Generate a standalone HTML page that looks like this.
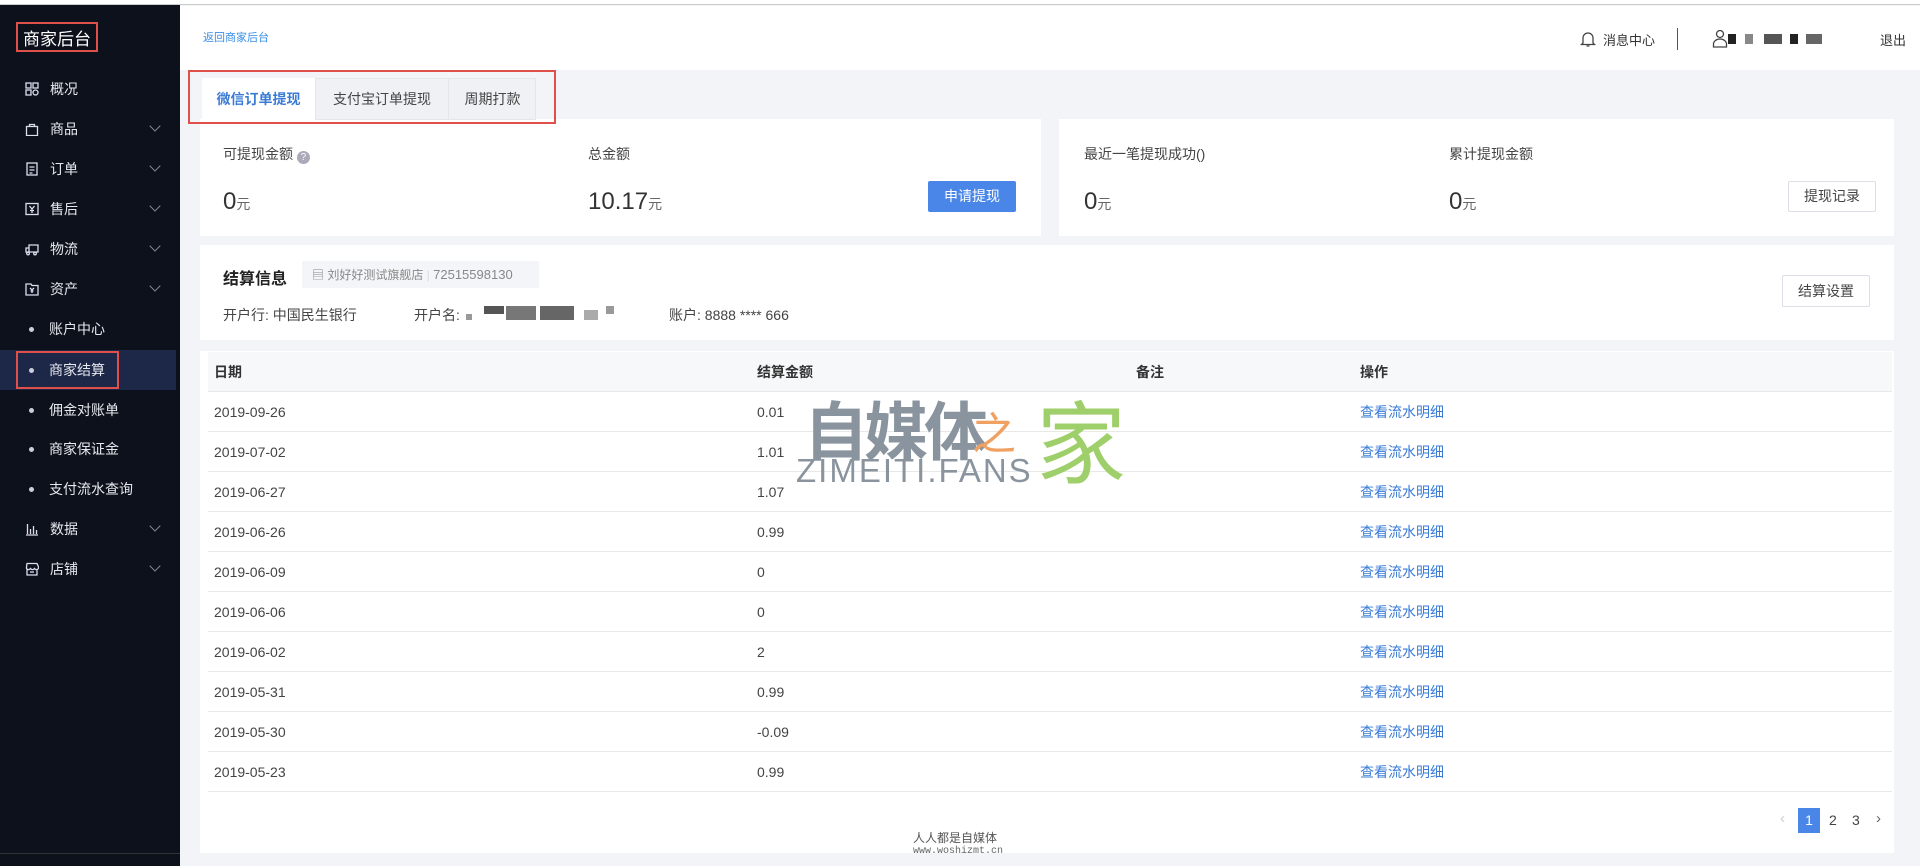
<!DOCTYPE html>
<html><head><meta charset="utf-8"><style>
*{margin:0;padding:0;box-sizing:border-box}
body{width:1920px;height:866px;overflow:hidden;background:#f3f4f7;font-family:"Liberation Sans","Noto Sans CJK SC",sans-serif;color:#333;position:relative}
.a{position:absolute;white-space:nowrap}
#top{position:absolute;left:0;top:0;width:1920px;height:5px;background:#fff;border-bottom:1px solid #ccc}
#side{position:absolute;left:0;top:5px;width:180px;height:861px;background:#0d111b}
.mi{position:absolute;left:0;width:180px;height:40px;color:#e6e8ee;font-size:14px;line-height:40px}
.mi .t{position:absolute;left:50px}
.mi .ic{position:absolute;left:25px;top:13px;width:14px;height:14px}
.mi .ch{position:absolute;left:151px;top:13px;width:8px;height:8px;border-right:1.5px solid #889;border-bottom:1.5px solid #889;transform:rotate(45deg)}
.mi .dot{position:absolute;left:29px;top:18px;width:5px;height:5px;border-radius:50%;background:#ccd}
.card{position:absolute;background:#fff}
.lab{font-size:14px;color:#444}
.val{font-size:24px;color:#333}
.val small{font-size:14px;color:#666}
.btn{position:absolute;border:1px solid #dcdfe6;background:#fff;font-size:14px;color:#444;text-align:center;border-radius:2px}
.row{position:absolute;left:208px;width:1684px;height:40px;border-bottom:1px solid #e8e8e8;font-size:14px;line-height:40px;color:#444}
.row span{position:absolute}
.row .c1{left:6px}.row .c2{left:549px}.row .c4{left:1152px;color:#3a7bd5}
</style></head><body>
<div id="top"></div>
<div id="side">
 <div class="a" style="left:16px;top:17px;width:82px;height:30px;border:2px solid #e0504a"></div>
 <div class="a" style="left:23px;top:20px;color:#fff;font-size:17px">商家后台</div>
 <div class="mi" style="top:64px"><svg class="ic" viewBox="0 0 14 14" fill="none" stroke="#dde" stroke-width="1.3"><rect x="1" y="1" width="5" height="5"/><rect x="8" y="1" width="5" height="5"/><rect x="1" y="8" width="5" height="5"/><circle cx="10.5" cy="10.5" r="2.5"/></svg><span class="t">概况</span></div>
 <div class="mi" style="top:104px"><svg class="ic" viewBox="0 0 14 14" fill="none" stroke="#dde" stroke-width="1.3"><path d="M1.5 4.5h11v9h-11z M4.5 4.5V2.5h5v2"/></svg><span class="t">商品</span><i class="ch"></i></div>
 <div class="mi" style="top:144px"><svg class="ic" viewBox="0 0 14 14" fill="none" stroke="#dde" stroke-width="1.3"><rect x="2" y="1" width="10" height="12"/><path d="M4.5 5h5M4.5 8h5M4.5 11h3"/></svg><span class="t">订单</span><i class="ch"></i></div>
 <div class="mi" style="top:184px"><svg class="ic" viewBox="0 0 14 14" fill="none" stroke="#dde" stroke-width="1.3"><rect x="1" y="1.5" width="12" height="11"/><path d="M4.5 4l2.5 3 2.5-3M7 7v4M5 8.5h4"/></svg><span class="t">售后</span><i class="ch"></i></div>
 <div class="mi" style="top:224px"><svg class="ic" viewBox="0 0 14 14" fill="none" stroke="#dde" stroke-width="1.3"><path d="M4 3h9v7H4zM4 6H1v4h3"/><circle cx="3" cy="11.5" r="1.3"/><circle cx="10" cy="11.5" r="1.3"/></svg><span class="t">物流</span><i class="ch"></i></div>
 <div class="mi" style="top:264px"><svg class="ic" viewBox="0 0 14 14" fill="none" stroke="#dde" stroke-width="1.3"><path d="M1 2h5l1 1.5h6V13H1z"/><path d="M5 6l2 2 2-2M7 8v3M5.5 9h3"/></svg><span class="t">资产</span><i class="ch"></i></div>
 <div class="mi" style="top:304px"><i class="dot"></i><span class="t" style="left:49px">账户中心</span></div>
 <div class="mi" style="top:345px;width:176px;background:#1d2849"><i class="dot"></i><span class="t" style="left:49px">商家结算</span></div>
 <div class="a" style="left:16px;top:346px;width:103px;height:38px;border:2px solid #e0504a"></div>
 <div class="mi" style="top:385px"><i class="dot"></i><span class="t" style="left:49px">佣金对账单</span></div>
 <div class="mi" style="top:424px"><i class="dot"></i><span class="t" style="left:49px">商家保证金</span></div>
 <div class="mi" style="top:464px"><i class="dot"></i><span class="t" style="left:49px">支付流水查询</span></div>
 <div class="mi" style="top:504px"><svg class="ic" viewBox="0 0 14 14" fill="none" stroke="#dde" stroke-width="1.3"><path d="M1 13h12M2.5 2v10M5.5 7v5M8.5 4v8M11.5 8v4"/></svg><span class="t">数据</span><i class="ch"></i></div>
 <div class="mi" style="top:544px"><svg class="ic" viewBox="0 0 14 14" fill="none" stroke="#dde" stroke-width="1.3"><path d="M2 1.5h10l1.5 3.5v1.5c-1 1.5-3 1.5-4 0-1 1.5-3 1.5-4 0-1 1.5-3 1.5-4 0V5z M2 7.5V13h10V7.5"/><path d="M5 10h4"/></svg><span class="t">店铺</span><i class="ch"></i></div>
 <div class="a" style="left:0;top:848px;width:180px;height:1px;background:#333"></div>
</div>
<div class="a" style="left:180px;top:6px;width:1740px;height:64px;background:#fff"></div>
<div class="a" style="left:203px;top:29px;font-size:11px;color:#3a8ee6">返回商家后台</div>
<svg class="a" style="left:1580px;top:30px" width="16" height="18" viewBox="0 0 16 18" fill="none" stroke="#444" stroke-width="1.3"><path d="M3 13V8a5 5 0 0 1 10 0v5l1.5 1.5h-13z M6.5 16h3"/></svg>
<div class="a" style="left:1603px;top:30px;font-size:13px;color:#333">消息中心</div>
<div class="a" style="left:1677px;top:28px;width:1px;height:22px;background:#555"></div>
<svg class="a" style="left:1712px;top:29px" width="16" height="20" viewBox="0 0 16 20" fill="none" stroke="#444" stroke-width="1.3"><circle cx="8" cy="5" r="3.5"/><path d="M1.5 18v-3a6.5 5 0 0 1 13 0v3z"/></svg>
<div class="a" style="left:1728px;top:34px;width:8px;height:10px;background:#222"></div>
<div class="a" style="left:1745px;top:34px;width:8px;height:10px;background:#888"></div>
<div class="a" style="left:1764px;top:34px;width:18px;height:10px;background:#555"></div>
<div class="a" style="left:1790px;top:34px;width:8px;height:10px;background:#222"></div>
<div class="a" style="left:1806px;top:34px;width:16px;height:10px;background:#666"></div>
<div class="a" style="left:1880px;top:30px;font-size:13px;color:#333">退出</div>

<div class="card" style="left:200px;top:119px;width:841px;height:117px"></div>
<div class="a" style="left:202px;top:78px;width:334px;height:42px;background:#f0f1f4;border:1px solid #e4e6ea"></div>
<div class="a" style="left:202px;top:78px;width:113px;height:43px;background:#fff;color:#3a7bd5;font-size:14px;line-height:42px;text-align:center;font-weight:bold">微信订单提现</div>
<div class="a" style="left:315px;top:78px;width:133px;height:42px;color:#444;font-size:14px;line-height:42px;text-align:center;border-left:1px solid #e4e6ea">支付宝订单提现</div>
<div class="a" style="left:448px;top:78px;width:88px;height:42px;color:#444;font-size:14px;line-height:42px;text-align:center;border-left:1px solid #e4e6ea">周期打款</div>
<div class="a" style="left:188px;top:70px;width:368px;height:54px;border:2px solid #e0504a;z-index:3"></div>

<div class="a lab" style="left:223px;top:144px">可提现金额 <span style="display:inline-block;width:13px;height:13px;border-radius:50%;background:#aab;color:#fff;font-size:10px;text-align:center;line-height:13px;vertical-align:-1px">?</span></div>
<div class="a val" style="left:223px;top:188px">0<small>元</small></div>
<div class="a lab" style="left:588px;top:144px">总金额</div>
<div class="a val" style="left:588px;top:188px">10.17<small>元</small></div>
<div class="a" style="left:928px;top:181px;width:88px;height:31px;background:#4a86e8;color:#fff;font-size:14px;line-height:31px;text-align:center;border-radius:2px">申请提现</div>

<div class="card" style="left:1059px;top:119px;width:835px;height:117px"></div>
<div class="a lab" style="left:1084px;top:144px">最近一笔提现成功()</div>
<div class="a val" style="left:1084px;top:188px">0<small>元</small></div>
<div class="a lab" style="left:1449px;top:144px">累计提现金额</div>
<div class="a val" style="left:1449px;top:188px">0<small>元</small></div>
<div class="btn" style="left:1788px;top:181px;width:88px;height:31px;line-height:29px">提现记录</div>

<div class="card" style="left:200px;top:245px;width:1694px;height:608px"></div>
<div class="a" style="left:200px;top:340px;width:1694px;height:11px;background:#f3f4f7"></div>
<div class="a" style="left:223px;top:265px;font-size:16px;font-weight:bold;color:#222">结算信息</div>
<div class="a" style="left:302px;top:261px;width:237px;height:27px;background:#f4f5f8;font-size:12px;color:#888;line-height:27px;padding-left:10px">▤ 刘好好测试旗舰店 <span style="color:#ddd">|</span> <span style="font-size:13px">72515598130</span></div>
<div class="a" style="left:223px;top:305px;font-size:14px;color:#444">开户行: 中国民生银行</div>
<div class="a" style="left:414px;top:305px;font-size:14px;color:#444">开户名:</div>
<div class="a" style="left:466px;top:314px;width:6px;height:6px;background:#999"></div>
<div class="a" style="left:484px;top:306px;width:20px;height:8px;background:#555"></div>
<div class="a" style="left:506px;top:306px;width:30px;height:14px;background:#777"></div>
<div class="a" style="left:540px;top:306px;width:34px;height:14px;background:#666"></div>
<div class="a" style="left:584px;top:310px;width:14px;height:10px;background:#aaa"></div>
<div class="a" style="left:606px;top:306px;width:8px;height:8px;background:#999"></div>
<div class="a" style="left:669px;top:305px;font-size:14px;color:#444">账户: 8888 **** 666</div>
<div class="btn" style="left:1782px;top:275px;width:88px;height:32px;line-height:30px">结算设置</div>

<div class="row" style="top:352px;background:#f7f8fa;font-weight:bold;color:#333"><span class="c1">日期</span><span class="c2">结算金额</span><span style="left:928px">备注</span><span style="left:1152px">操作</span></div>
<div class="row" style="top:392px"><span class="c1">2019-09-26</span><span class="c2">0.01</span><span class="c4">查看流水明细</span></div>
<div class="row" style="top:432px"><span class="c1">2019-07-02</span><span class="c2">1.01</span><span class="c4">查看流水明细</span></div>
<div class="row" style="top:472px"><span class="c1">2019-06-27</span><span class="c2">1.07</span><span class="c4">查看流水明细</span></div>
<div class="row" style="top:512px"><span class="c1">2019-06-26</span><span class="c2">0.99</span><span class="c4">查看流水明细</span></div>
<div class="row" style="top:552px"><span class="c1">2019-06-09</span><span class="c2">0</span><span class="c4">查看流水明细</span></div>
<div class="row" style="top:592px"><span class="c1">2019-06-06</span><span class="c2">0</span><span class="c4">查看流水明细</span></div>
<div class="row" style="top:632px"><span class="c1">2019-06-02</span><span class="c2">2</span><span class="c4">查看流水明细</span></div>
<div class="row" style="top:672px"><span class="c1">2019-05-31</span><span class="c2">0.99</span><span class="c4">查看流水明细</span></div>
<div class="row" style="top:712px"><span class="c1">2019-05-30</span><span class="c2">-0.09</span><span class="c4">查看流水明细</span></div>
<div class="row" style="top:752px"><span class="c1">2019-05-23</span><span class="c2">0.99</span><span class="c4">查看流水明细</span></div>

<div class="a" style="left:1780px;top:810px;font-size:15px;color:#ccc">‹</div>
<div class="a" style="left:1798px;top:808px;width:22px;height:25px;background:#4a86e8;color:#fff;font-size:14px;line-height:25px;text-align:center">1</div>
<div class="a" style="left:1829px;top:812px;font-size:14px;color:#444">2</div>
<div class="a" style="left:1852px;top:812px;font-size:14px;color:#444">3</div>
<div class="a" style="left:1876px;top:810px;font-size:15px;color:#666">›</div>

<div class="a" style="left:804px;top:382px;font-size:64px;font-weight:bold;color:#8a949e;letter-spacing:-4px">自媒体</div>
<div class="a" style="left:972px;top:398px;font-size:44px;color:#f0a060">之</div>
<div class="a" style="left:1036px;top:372px;font-size:90px;color:#9fcf6a">家</div>
<div class="a" style="left:796px;top:452px;font-size:33px;color:#8a949e;letter-spacing:2px">ZIMEITI.FANS</div>
<div class="a" style="left:913px;top:829px;font-size:12px;color:#555">人人都是自媒体</div>
<div class="a" style="left:913px;top:846px;font-size:10px;color:#666;font-family:'Liberation Mono',monospace">www.woshizmt.cn</div>
</body></html>
